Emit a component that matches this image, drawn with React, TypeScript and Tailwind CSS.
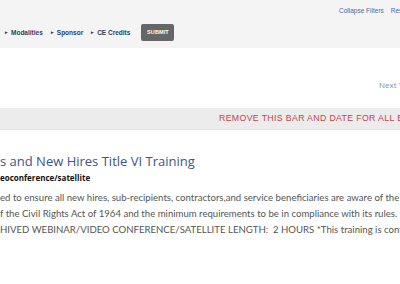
import React from "react";

const filters = ["Modalities", "Sponsor", "CE Credits"];

const bodyLines = [
  "ed to ensure all new hires, sub-recipients, contractors,and service beneficiaries are aware of the",
  "f the Civil Rights Act of 1964 and the minimum requirements to be in compliance with its rules.",
  "HIVED WEBINAR/VIDEO CONFERENCE/SATELLITE LENGTH:  2 HOURS *This training is continuous",
];

export default function App() {
  return (
    <div className="w-[400px] h-[284px] overflow-hidden bg-white font-['Liberation_Sans',sans-serif]">
      {/* filter bar */}
      <div className="h-[48px] bg-[#f4f4f4] flex flex-col">
        <div className="flex gap-[7px] pl-[339px] pt-[6px] whitespace-nowrap text-[6.5px] leading-[10px] text-[#4d6a99]">
          <span>Collapse Filters</span>
          <span>Reset Filters</span>
        </div>
        <div className="flex items-center pl-[5px] mt-[8px] whitespace-nowrap">
          {filters.map((f) => (
            <span key={f} className="flex items-center mr-[8px] text-[6.5px] font-bold text-[#2d3f66]">
              <span className="text-[5px] mr-[3px]">▸</span>
              {f}
            </span>
          ))}
          <button className="ml-[3px] w-[33px] h-[17px] rounded-[2px] bg-[#666666] text-white text-[5.5px] font-bold tracking-[0.02em]">
            SUBMIT
          </button>
        </div>
      </div>

      {/* pager */}
      <div className="h-[60px] pl-[379px] pt-[32px] whitespace-nowrap text-[8px] leading-[10px] text-[#7d8cab] font-['Open_Sans',sans-serif]">
        Next Training
      </div>

      {/* notice bar */}
      <div className="h-[22px] bg-[#ececec] border-b border-[#e4e4e4] flex items-center pl-[219px] whitespace-nowrap text-[8.75px] tracking-[0.04em] text-[#c7414b]">
        REMOVE THIS BAR AND DATE FOR ALL EVENTS
      </div>

      {/* course */}
      <div className="pt-[22px] whitespace-pre">
        <div className="text-[13px] leading-[18px] text-[#3c5585] font-['Open_Sans',sans-serif]">
          s and New Hires Title VI Training
        </div>
        <div className="mt-[1px] text-[8px] leading-[14px] font-bold text-[#111] font-['Open_Sans',sans-serif]">
          eoconference/satellite
        </div>
        <div className="mt-[5px] text-[9.6px] leading-[16px] text-[#555555] font-['Lato',sans-serif]">
          {bodyLines.map((l) => (
            <div key={l}>{l}</div>
          ))}
        </div>
      </div>
    </div>
  );
}
